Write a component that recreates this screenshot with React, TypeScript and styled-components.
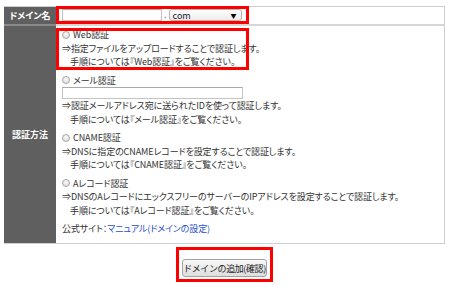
import React from 'react';
import styled, { createGlobalStyle } from 'styled-components';

const GlobalStyle = createGlobalStyle`
  body {
    margin: 0;
    background: #fff;
    font-family: "Noto Sans CJK JP", "Noto Sans", sans-serif;
    font-feature-settings: "palt";
    color: #333;
  }
`;

const Page = styled.div`
  padding: 6px 0 0 4px;
  width: 441px;
`;

const Table = styled.div`
  display: grid;
  grid-template-columns: 52px 1fr;
  grid-template-rows: 17px auto;
  border: 1px solid #cfcfcf;
  border-left: 0;
`;

const Label = styled.div<{ $first?: boolean }>`
  display: flex;
  align-items: center;
  justify-content: center;
  background: #5f5f5f;
  color: #fff;
  font-size: 9px;
  font-weight: bold;
  border-top: ${({ $first }) => ($first ? '0' : '2px solid #8a8a8a')};
`;

const Value = styled.div<{ $first?: boolean }>`
  display: flex;
  flex-direction: column;
  align-items: flex-start;
  border-top: ${({ $first }) => ($first ? '0' : '2px solid #d6d6d6')};
  padding: ${({ $first }) => ($first ? '0' : '2px 0 7px 6px')};
  font-size: 9px;
`;

const DomainBox = styled.div`
  box-sizing: border-box;
  display: flex;
  align-items: center;
  width: 193px;
  height: 18px;
  margin-top: -1px;
  padding: 0 3px;
  border: 3px solid #f00;
  gap: 2px;
`;

const TextInput = styled.div<{ $w: number }>`
  box-sizing: border-box;
  width: ${({ $w }) => $w}px;
  height: 12px;
  border: 1px solid #c4c4c4;
  border-top-color: #a9a9a9;
  background: #fff;
`;

const Dot = styled.span`
  font-size: 9px;
  color: #666;
  line-height: 12px;
`;

const Select = styled.div`
  box-sizing: border-box;
  display: flex;
  align-items: center;
  justify-content: space-between;
  width: 73px;
  height: 12px;
  padding: 0 4px 0 3px;
  border: 1px solid #b4b4b4;
  border-radius: 3px;
  background: linear-gradient(#fff, #ececec);
  font-size: 9px;
  color: #222;
  span { font-size: 6px; color: #000; }
`;

const Option = styled.div<{ $marked?: boolean }>`
  position: relative;
  display: flex;
  flex-direction: column;
  align-items: flex-start;
  & + & { margin-top: 5px; }
  ${({ $marked }) =>
    $marked &&
    `&::after {
      content: '';
      position: absolute;
      left: -6px;
      top: 0;
      bottom: -1px;
      width: 193px;
      box-sizing: border-box;
      border: 3px solid #f00;
      pointer-events: none;
    }`}
`;

const Line = styled.div<{ $indent?: boolean }>`
  height: 13.5px;
  line-height: 13.5px;
  white-space: nowrap;
  letter-spacing: -0.1px;
  padding-left: ${({ $indent }) => ($indent ? '8px' : '0')};
  display: flex;
  align-items: center;
`;

const Radio = styled.span`
  box-sizing: border-box;
  width: 8px;
  height: 8px;
  margin-right: 3px;
  border-radius: 50%;
  border: 1px solid #aaa;
  background: radial-gradient(circle at 50% 35%, #fbfbfb, #d4d4d4);
`;

const Site = styled(Line)`
  margin-top: 5px;
`;

const Link = styled.a`
  color: #2a4fd0;
  text-decoration: none;
`;

const ButtonRow = styled.div`
  display: flex;
  justify-content: center;
  margin-top: 3px;
`;

const ButtonBox = styled.div`
  padding: 3px 3px 2px;
  border: 3px solid #f00;
`;

const Button = styled.button`
  box-sizing: border-box;
  width: 85px;
  height: 18px;
  padding: 0;
  border: 1px solid #a3a3a3;
  border-radius: 3px;
  background: linear-gradient(#f8f8f8, #dedede);
  font-family: inherit;
  font-size: 9px;
  letter-spacing: -0.4px;
  white-space: nowrap;
  color: #222;
`;

const methods = [
  {
    name: 'Web認証',
    desc: '⇒指定ファイルをアップロードすることで認証します。',
    marked: true,
  },
  {
    name: 'メール認証',
    desc: '⇒認証メールアドレス宛に送られたIDを使って認証します。',
    input: true,
  },
  {
    name: 'CNAME認証',
    desc: '⇒DNSに指定のCNAMEレコードを設定することで認証します。',
  },
  {
    name: 'Aレコード認証',
    desc: '⇒DNSのAレコードにエックスフリーのサーバーのIPアドレスを設定することで認証します。',
  },
];

export default function App() {
  return (
    <Page>
      <GlobalStyle />
      <Table>
        <Label $first>ドメイン名</Label>
        <Value $first>
          <DomainBox>
            <TextInput $w={100} />
            <Dot>.</Dot>
            <Select>
              com<span>▼</span>
            </Select>
          </DomainBox>
        </Value>
        <Label>認証方法</Label>
        <Value>
          {methods.map((m) => (
            <Option key={m.name} $marked={m.marked}>
              <Line>
                <Radio />
                {m.name}
              </Line>
              {m.input && <TextInput $w={181} />}
              <Line>{m.desc}</Line>
              <Line $indent>手順については『{m.name}』をご覧ください。</Line>
            </Option>
          ))}
          <Site>
            公式サイト：<Link href="#">マニュアル(ドメインの設定)</Link>
          </Site>
        </Value>
      </Table>
      <ButtonRow>
        <ButtonBox>
          <Button>ドメインの追加(確認)</Button>
        </ButtonBox>
      </ButtonRow>
    </Page>
  );
}
